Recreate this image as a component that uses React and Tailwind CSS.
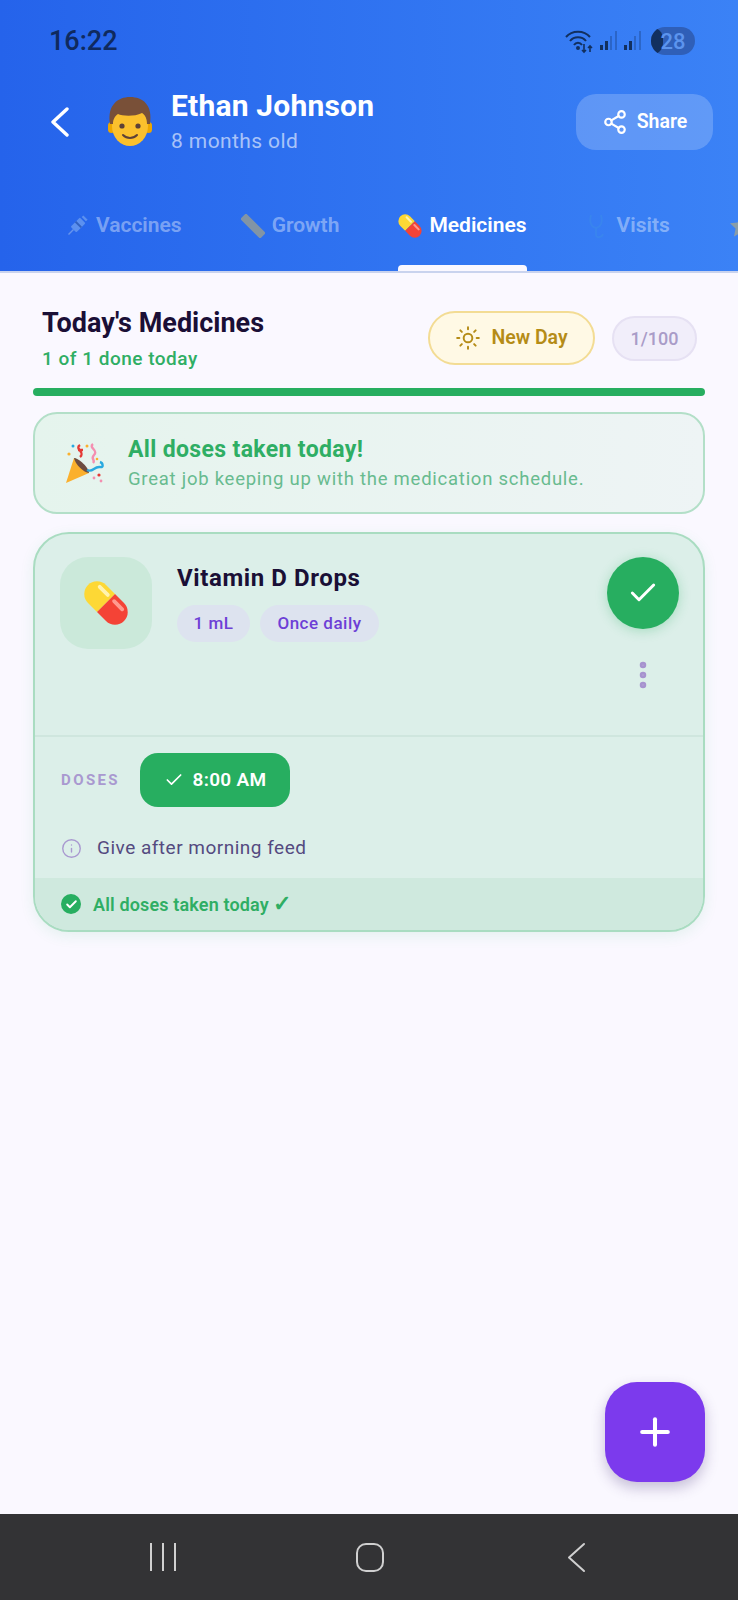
import React from "react";
import { Share2, Sun, Check, Info, Plus, EllipsisVertical } from "lucide-react";

const Chevron = ({ w, h, color, stroke, className }) => (
  <svg width={w} height={h} viewBox={`0 0 ${w} ${h}`} fill="none" className={className}>
    <polyline
      points={`${w - 2},2 2,${h / 2} ${w - 2},${h - 2}`}
      stroke={color}
      strokeWidth={stroke}
      strokeLinecap="round"
      strokeLinejoin="round"
    />
  </svg>
);

const PillEmoji = ({ size = 44, className }) => (
  <svg width={size} height={size} viewBox="0 0 44 44" className={className}>
    <g transform="rotate(45 22 22)">
      <path d="M22 12 H12 a10 10 0 0 0 0 20 H22 Z" fill="#fdd835" />
      <path d="M22 12 H32 a10 10 0 0 1 0 20 H22 Z" fill="#f44336" />
      <rect x="8" y="15" width="12" height="3" rx="1.5" fill="#fff3b0" />
      <rect x="24" y="15" width="12" height="3" rx="1.5" fill="#ff9a8f" />
    </g>
  </svg>
);

const BoyEmoji = () => (
  <svg width="46" height="50" viewBox="0 0 46 50">
    <rect x="1" y="25" width="7" height="11" rx="3.5" fill="#eda600" />
    <rect x="38" y="25" width="7" height="11" rx="3.5" fill="#eda600" />
    <ellipse cx="23" cy="29" rx="18" ry="20" fill="#fbc02d" />
    <path d="M3 27 C0 8 11 0 23 0 C36 0 46 8 43 27 L40 27 C40 21 38 18 35 16 C27 20 15 19 11 17 C8 19 6 22 6 27 Z" fill="#795038" />
    <circle cx="15" cy="29" r="2.6" fill="#5d4037" />
    <circle cx="31" cy="29" r="2.6" fill="#5d4037" />
    <path d="M16 38 C20 42 26 42 30 38" stroke="#5d4037" strokeWidth="2" fill="none" strokeLinecap="round" />
  </svg>
);

const SyringeEmoji = () => (
  <svg width="24" height="24" viewBox="0 0 24 24" className="opacity-45">
    <g transform="rotate(45 12 12)">
      <rect x="8" y="4" width="8" height="13" rx="1" fill="#9cc4f5" />
      <rect x="8" y="9" width="8" height="2" fill="#3f5b8c" />
      <rect x="11.3" y="17" width="1.4" height="7" fill="#b6cdf0" />
      <rect x="9" y="0" width="6" height="2.4" fill="#9cc4f5" />
    </g>
  </svg>
);

const RulerEmoji = () => (
  <svg width="24" height="24" viewBox="0 0 24 24" className="opacity-55">
    <g transform="rotate(-45 12 12)">
      <rect x="8" y="-2" width="8" height="28" rx="1" fill="#c9b46a" />
    </g>
  </svg>
);

const StethoscopeEmoji = () => (
  <svg width="24" height="26" viewBox="0 0 24 26" fill="none" className="opacity-45">
    <path d="M5 2 C3 9 5 14 10 15 C15 14 17 9 15 2" stroke="#3d8fe8" strokeWidth="1.8" />
    <path d="M10 15 V22 C10 25 16 25 17 21" stroke="#3d8fe8" strokeWidth="1.8" />
  </svg>
);

const StarEmoji = () => (
  <svg width="24" height="24" viewBox="0 0 24 24" className="opacity-55">
    <path d="M12 1 L15.4 8.4 L23 9.3 L17.4 14.6 L19 22.5 L12 18.5 L5 22.5 L6.6 14.6 L1 9.3 L8.6 8.4 Z" fill="#c9b46a" />
  </svg>
);

const PartyEmoji = () => (
  <svg width="42" height="42" viewBox="0 0 42 42">
    <path d="M2 41 L10 16 L25 31 Z" fill="#fbb02d" />
    <path d="M10 16 C15 16 25 26 25 31 C20 31 11 22 10 16 Z" fill="#6d4c41" />
    <path d="M16 3 C10 7 22 10 16 15 M14 8 H19" stroke="#e53935" strokeWidth="2.4" fill="none" />
    <path d="M29 2 C24 6 35 8 30 13 C26 17 32 18 29 21" stroke="#f48fb1" strokeWidth="2.4" fill="none" />
    <path d="M23 28 C29 31 30 24 36 25 C40 26 39 21 36 20" stroke="#29a9e0" strokeWidth="2.4" fill="none" />
    <circle cx="5" cy="12" r="1.6" fill="#fbb02d" />
    <circle cx="9" cy="4" r="1.5" fill="#29a9e0" />
    <circle cx="23" cy="4" r="1.5" fill="#fbb02d" />
    <circle cx="35" cy="33" r="1.6" fill="#e53935" />
    <circle cx="30" cy="36" r="1.4" fill="#f48fb1" />
    <circle cx="37" cy="39" r="1.4" fill="#f48fb1" />
    <circle cx="33" cy="17" r="1.3" fill="#fbb02d" />
  </svg>
);

const SignalBars = () => (
  <svg width="20" height="22" viewBox="0 0 20 22">
    <rect x="1" y="15" width="3" height="5" fill="#12305f" />
    <rect x="6" y="11" width="3" height="9" fill="#12305f" />
    <rect x="11" y="6" width="2" height="14" fill="#12305f" opacity="0.3" />
    <rect x="16" y="1" width="2" height="19" fill="#12305f" opacity="0.3" />
  </svg>
);

const WifiIcon = () => (
  <svg width="30" height="26" viewBox="0 0 30 26" fill="none" stroke="#12305f" strokeWidth="2">
    <path d="M1 9 C7 2 19 2 25 9" />
    <path d="M5 13 C9 8 17 8 21 13" />
    <path d="M9 17 C11 14 15 14 17 17" />
    <circle cx="13" cy="20" r="1" fill="#12305f" />
    <path d="M19 16 V24 M17 22 L19 24 L21 22" strokeWidth="1.6" />
    <path d="M25 24 V18 M23 20 L25 18 L27 20" strokeWidth="1.6" />
  </svg>
);

const Tab = ({ icon, label, active }) => (
  <div className="relative flex h-full shrink-0 items-center gap-[7px] pb-[10px]">
    <span className="flex w-[24px] justify-center">{icon}</span>
    {label && (
      <span className={active ? "text-[21px] font-semibold text-white" : "text-[21px] font-semibold text-white/40"}>{label}</span>
    )}
    {active && <div className="absolute bottom-0 left-0 right-0 h-[6px] rounded-t bg-[#faf8ff]" />}
  </div>
);

export default function App() {
  return (
    <div className="relative flex h-[1600px] w-[738px] flex-col overflow-hidden bg-[#faf8ff] font-['Roboto',sans-serif]">
      {/* header */}
      <header className="h-[273px] shrink-0 overflow-hidden border-b-2 border-[#c9d3ee] bg-gradient-to-r from-[#2563eb] to-[#3b82f6]">
        <div className="flex h-[82px] items-center justify-between pl-[49px] pr-[43px]">
          <span className="text-[27px] font-medium text-[#0f2a5e]">16:22</span>
          <div className="flex items-center gap-[4px]">
            <WifiIcon />
            <SignalBars />
            <SignalBars />
            <span className="relative ml-[4px] flex h-[28px] w-[44px] items-center justify-center overflow-hidden rounded-full bg-[#2f5fb8] text-[22px] font-medium text-[#5c94ee]">
              <span className="absolute bottom-0 left-0 top-0 w-[12px] rounded-r-full bg-[#12305f]" />
              <span className="relative">28</span>
            </span>
          </div>
        </div>

        <div className="flex h-[80px] items-center pl-[51px] pr-[25px]">
          <Chevron w={18} h={30} color="#ffffff" stroke={3.4} />
          <div className="ml-[38px] mr-[18px] flex w-[46px] justify-center">
            <BoyEmoji />
          </div>
          <div className="flex-1">
            <div className="text-[30px] font-bold leading-[35px] tracking-[0.2px] text-white">Ethan Johnson</div>
            <div className="mt-[3px] text-[21px] leading-[30px] tracking-[0.4px] text-white/60">8 months old</div>
          </div>
          <button className="flex h-[56px] w-[137px] items-center justify-center gap-[9px] rounded-[20px] bg-white/20 text-[19.5px] font-semibold text-white">
            <Share2 className="h-[26px] w-[26px]" strokeWidth={2} />
            Share
          </button>
        </div>

        <div className="flex h-[109px] items-end">
          <div className="flex h-[80px] w-full gap-[59px] pl-[65px]">
            <Tab icon={<SyringeEmoji />} label="Vaccines" />
            <Tab icon={<RulerEmoji />} label="Growth" />
            <Tab icon={<PillEmoji size={30} className="-mx-[3px] shrink-0" />} label="Medicines" active />
            <Tab icon={<StethoscopeEmoji />} label="Visits" />
            <Tab icon={<StarEmoji />} />
          </div>
        </div>
      </header>

      {/* content */}
      <main className="flex-1 px-[33px] pt-[35px]">
        <div className="flex h-[80px] items-start justify-between pl-[9px] pr-[8px]">
          <div>
            <h1 className="-mt-[1px] text-[27px] font-bold leading-[32px] text-[#1a0f36]">Today's Medicines</h1>
            <p className="mt-[8px] text-[19px] font-medium leading-[24px] tracking-[0.5px] text-[#2fae64]">1 of 1 done today</p>
          </div>
          <div className="mt-[3px] flex items-center gap-[17px]">
            <button className="flex h-[54px] w-[167px] items-center justify-center gap-[10px] rounded-full border-2 border-[#f3dc94] bg-[#fff9e5] text-[19.5px] font-semibold text-[#b58c17]">
              <Sun className="h-[26px] w-[26px]" strokeWidth={1.8} />
              New Day
            </button>
            <span className="flex h-[45px] w-[85px] items-center justify-center rounded-full border-2 border-[#e6e1f3] bg-[#f1eefa] text-[18px] font-medium text-[#a99cc8]">1/100</span>
          </div>
        </div>

        <div className="h-[8px] rounded-full bg-[#27ae60]" />

        <section className="mt-[16px] flex h-[102px] items-center rounded-[24px] border-2 border-[#b3dfc8] bg-gradient-to-r from-[#e5f4ed] to-[#eef4f5] pl-[29px]">
          <PartyEmoji />
          <div className="ml-[22px]">
            <div className="text-[23px] font-bold leading-[30px] tracking-[0.35px] text-[#2fae64]">All doses taken today!</div>
            <div className="mt-[1px] text-[18.5px] leading-[26px] tracking-[0.75px] text-[#68bb8f]">Great job keeping up with the medication schedule.</div>
          </div>
        </section>

        <section className="mt-[18px] h-[400px] overflow-hidden rounded-[36px] border-2 border-[#a9dcc1] bg-[#dcefe9] shadow-[0_4px_14px_rgba(39,174,96,0.1)]">
          <div className="flex h-[203px] border-b-2 border-[#cfe6de] pl-[25px] pr-[24px] pt-[23px]">
            <div className="flex h-[92px] w-[92px] items-center justify-center rounded-[28px] bg-[#cbe9da]">
              <PillEmoji size={56} />
            </div>
            <div className="ml-[25px] flex-1">
              <div className="pt-[6px] text-[24px] font-bold leading-[30px] tracking-[0.6px] text-[#1a0f36]">Vitamin D Drops</div>
              <div className="mt-[12px] flex gap-[10px]">
                <span className="flex h-[37px] w-[73px] items-center justify-center rounded-full bg-[#dde3ef] text-[17px] font-medium tracking-[0.5px] text-[#6d3fd6]">1 mL</span>
                <span className="flex h-[37px] w-[119px] items-center justify-center rounded-full bg-[#dde3ef] text-[17px] font-medium tracking-[0.5px] text-[#6d3fd6]">Once daily</span>
              </div>
            </div>
            <div className="flex flex-col items-center">
              <div className="flex h-[72px] w-[72px] items-center justify-center rounded-full bg-[#27ae60] shadow-[0_2px_12px_rgba(39,174,96,0.3)]">
                <Check className="h-[32px] w-[32px] text-white" strokeWidth={2.2} />
              </div>
              <EllipsisVertical className="mt-[29px] h-[34px] w-[34px] text-[#a793cf]" strokeWidth={2.6} />
            </div>
          </div>

          <div className="flex h-[86px] items-center pl-[26px]">
            <span className="w-[79px] text-[15px] font-bold tracking-[2.4px] text-[#a999d0]">DOSES</span>
            <button className="flex h-[54px] w-[150px] items-center justify-center gap-[9px] rounded-[18px] bg-[#27ae60] text-[19px] font-semibold tracking-[0.3px] text-white">
              <Check className="h-[20px] w-[20px]" strokeWidth={2} />
              8:00 AM
            </button>
          </div>

          <div className="flex h-[50px] items-center pl-[26px]">
            <Info className="h-[21px] w-[21px] text-[#a999d0]" strokeWidth={1.6} />
            <span className="ml-[15px] text-[19px] tracking-[0.5px] text-[#544a80]">Give after morning feed</span>
          </div>

          <div className="mt-[5px] flex h-[52px] items-center bg-[#cfe9de] pl-[26px]">
            <span className="flex h-[20px] w-[20px] items-center justify-center rounded-full bg-[#27ae60]">
              <Check className="h-[13px] w-[13px] text-white" strokeWidth={3.5} />
            </span>
            <span className="ml-[12px] text-[18px] font-semibold tracking-[0.15px] text-[#2fae64]">
              All doses taken today <span className="text-[22px] leading-none">✓</span>
            </span>
          </div>
        </section>
      </main>

      <button className="absolute left-[605px] top-[1382px] flex h-[100px] w-[100px] items-center justify-center rounded-[32px] bg-[#7c3aed] shadow-[0_6px_14px_rgba(60,40,110,0.28)]">
        <Plus className="h-[44px] w-[44px] text-white" strokeWidth={2.2} />
      </button>

      {/* android nav bar */}
      <nav className="flex h-[86px] shrink-0 items-center bg-[#333335]">
        <div className="ml-[150px] flex h-[28px] w-[26px] justify-between">
          <span className="w-[2px] bg-[#d0d0d0]" />
          <span className="w-[2px] bg-[#d0d0d0]" />
          <span className="w-[2px] bg-[#d0d0d0]" />
        </div>
        <div className="ml-[180px] h-[29px] w-[28px] rounded-[10px] border-[2.5px] border-[#d0d0d0]" />
        <Chevron w={19} h={31} color="#d0d0d0" stroke={2} className="ml-[183px]" />
      </nav>
    </div>
  );
}
